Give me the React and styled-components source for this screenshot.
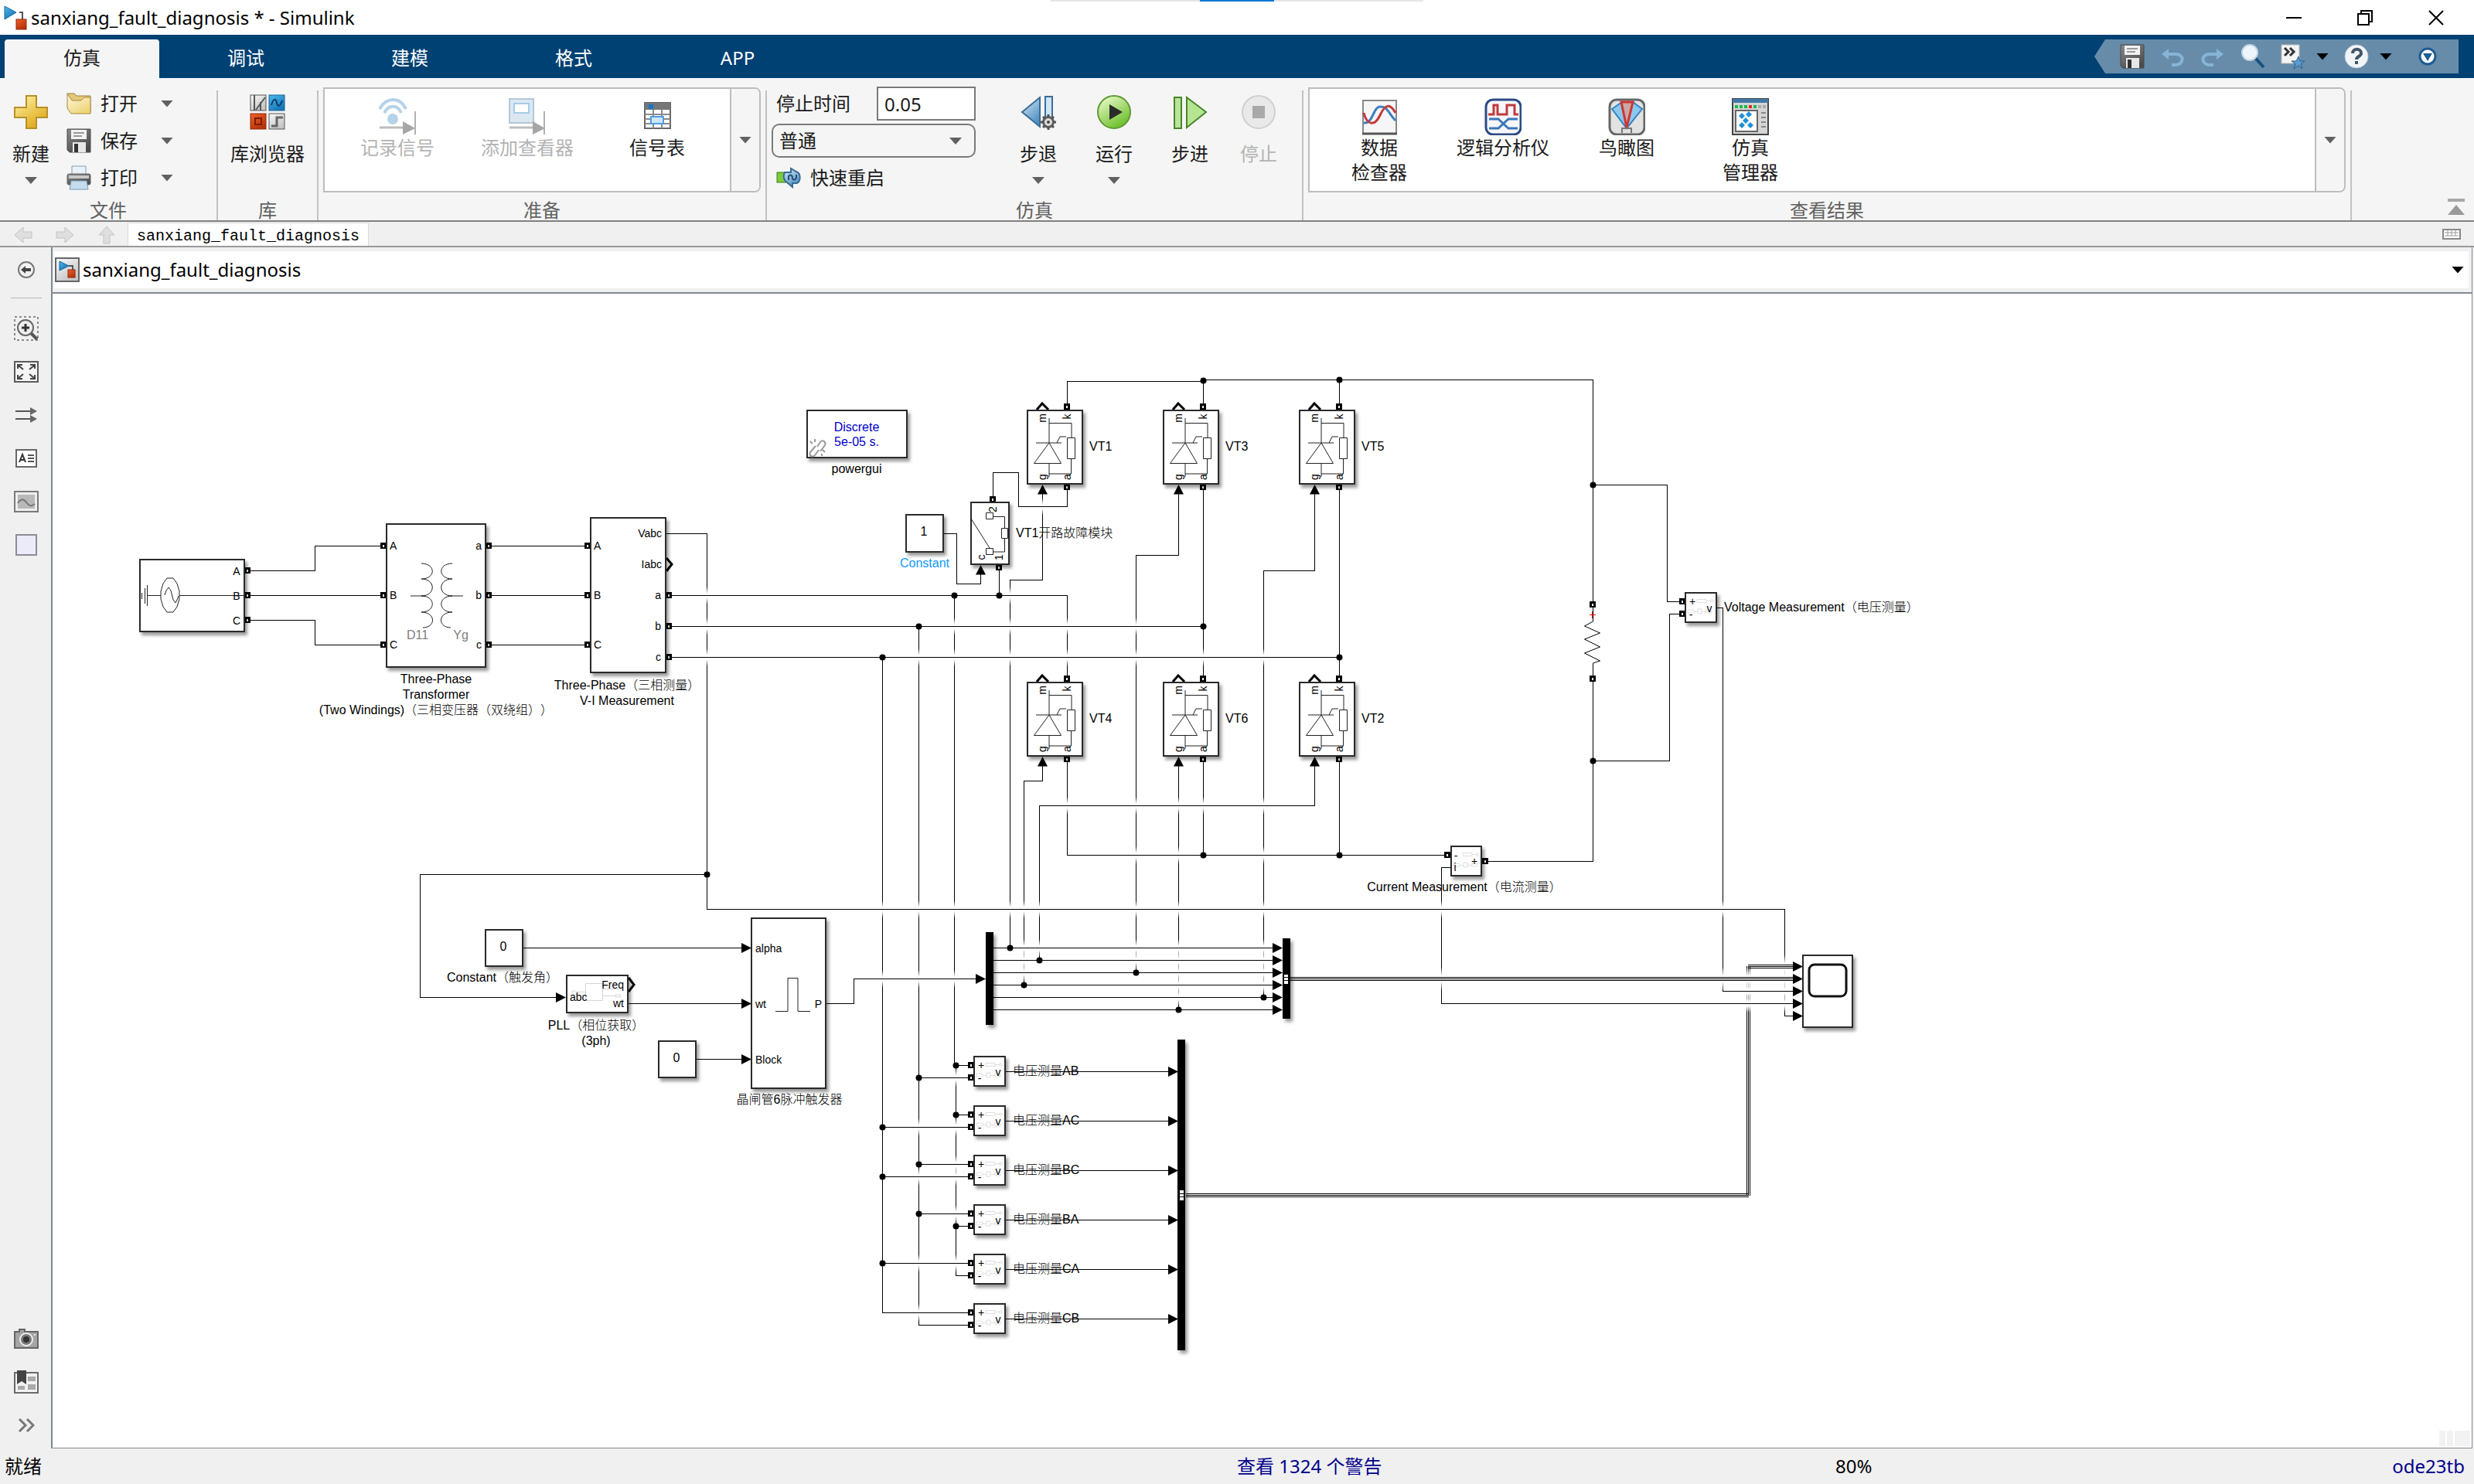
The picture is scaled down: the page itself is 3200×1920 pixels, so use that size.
import React from "react";
import styled, { createGlobalStyle, css } from "styled-components";

const GlobalStyle = createGlobalStyle`
  * { box-sizing: border-box; }
  body { margin: 0; background: #f0f0f0; }
  button, input, select { font: inherit; color: inherit; }
  button { background: none; border: 0; padding: 0; }
`;

const uiFont = `"Noto Sans", "Noto Sans CJK SC", sans-serif`;
const modelFont = `"Liberation Sans", "Noto Sans CJK SC", sans-serif`;

const Window = styled.div`
  display: flex;
  flex-direction: column;
  min-height: 100vh;
  font-family: ${uiFont};
  font-size: 24px;
  line-height: 32px;
  color: #1a1a1a;
  background: #f0f0f0;
`;

/* ---------- title bar ---------- */
const TitleBar = styled.header`
  position: relative;
  display: flex;
  align-items: center;
  height: 45px;
  padding: 0 3px;
  background: #fff;
  color: #000;
`;
const Title = styled.h1`
  margin: 0 auto 0 5px;
  font-size: 24px;
  font-weight: 400;
  line-height: 32px;
`;
const CaptionButton = styled.button`
  display: flex;
  align-items: center;
  justify-content: center;
  width: 92px;
  height: 43px;
`;
const DragHandle = styled.div`
  position: absolute;
  top: 0;
  left: 50%;
  width: 482px;
  height: 2px;
  transform: translateX(-50%);
  background: linear-gradient(90deg, #e5e5e5 40%, #0078d7 40%, #0078d7 60%, #e5e5e5 60%);
`;

/* ---------- tabs ---------- */
const TabBar = styled.nav`
  display: flex;
  align-items: flex-end;
  gap: 12px;
  height: 56px;
  padding: 0 20px 0 6px;
  background: #004173;
`;
const Tab = styled.button`
  width: 200px;
  height: 50px;
  padding-bottom: 3px;
  border-radius: 4px 4px 0 0;
  color: ${(p) => (p.$active ? "#1a1a1a" : "#fff")};
  background: ${(p) => (p.$active ? "#f5f5f5" : "transparent")};
`;
const QuickBar = styled.div`
  display: flex;
  align-items: center;
  gap: 20px;
  width: 471px;
  height: 44px;
  margin: 0 0 6px auto;
  padding: 0 28px 0 33px;
  background: #668caa;
  clip-path: polygon(14px 0, 100% 0, 100% 100%, 14px 100%, 0 50%);
`;
const QuickGroup = styled.div`
  display: flex;
  align-items: center;
  gap: 14px;
`;
const IconButton = styled.button`
  display: flex;
  align-items: center;
  align-self: ${(p) => (p.$middle ? "center" : "auto")};
  justify-content: center;
  min-width: 16px;
  margin-left: ${(p) => (p.$end ? "auto" : "0")};
`;

/* ---------- tool strip ---------- */
const Strip = styled.div`
  display: flex;
  height: 186px;
  padding-top: 9px;
  border-bottom: 2px solid #808080;
  background: #f5f5f5;
`;
const Section = styled.section`
  display: flex;
  flex-direction: column;
  width: ${(p) => (p.$width ? `${p.$width}px` : "auto")};
  flex: ${(p) => (p.$width ? "none" : "1")};
  padding: 0 6px;
`;
const SectionBody = styled.div`
  display: flex;
  height: 144px;
`;
const SectionTitle = styled.h2`
  margin: 5px 0 0;
  font-size: 24px;
  font-weight: 400;
  line-height: 26px;
  text-align: center;
  color: #616161;
`;
const Divider = styled.div`
  width: 2px;
  margin-top: 7px;
  background: #c2c2c2;
`;
const Column = styled.div`
  display: flex;
  flex-direction: column;
  width: ${(p) => p.$width}px;
`;
const FileColumn = styled(Column)`
  padding-left: 6px;
`;
const RunColumn = styled(Column)`
  margin-right: 32px;
`;
const Row = styled.div`
  display: flex;
  align-items: center;
  height: 48px;
  padding-left: ${(p) => (p.$inset ? 6 : 0)}px;
`;
const RowButton = styled.button`
  display: flex;
  align-items: center;
  gap: 12px;
`;
const BigButton = styled.button`
  display: flex;
  flex-direction: column;
  align-items: center;
  width: ${(p) => p.$width}px;
  padding-top: 12px;
  white-space: nowrap;
  color: ${(p) => (p.disabled ? "#b3b3b3" : "#1a1a1a")};
`;
const BigLabel = styled.span`
  margin: 15px 0 14px;
  line-height: 32px;
`;
const Arrow = styled.span`
  width: 16px;
  height: 9px;
  background: ${(p) => p.$color || "#616161"};
  clip-path: polygon(0 0, 100% 0, 50% 100%);
`;
const DropButton = styled.button`
  display: flex;
  margin-left: 30px;
`;
const Gallery = styled.div`
  display: flex;
  flex: 1;
  height: 136px;
  margin-top: 3px;
  border: 2px solid #bdbdbd;
  border-radius: 0 8px 8px 0;
  background: #fff;
  overflow: hidden;
`;
const GalleryItems = styled.div`
  display: flex;
  flex: 1;
  padding-left: 10px;
`;
const GalleryItem = styled.button`
  display: flex;
  flex-direction: column;
  align-items: center;
  width: ${(p) => p.$width}px;
  padding-top: 12px;
  line-height: 32px;
  color: ${(p) => (p.disabled ? "#b3b3b3" : "#1a1a1a")};
`;
const GalleryMore = styled.button`
  display: flex;
  align-items: center;
  justify-content: center;
  width: 38px;
  border-left: 2px solid #bdbdbd;
  background: #f5f5f5;
`;
const TimeLabel = styled.label`
  margin-right: auto;
`;
const TimeInput = styled.input`
  width: 128px;
  height: 44px;
  padding: 0 8px;
  border: 2px solid #7a7a7a;
  background: #fff;
`;
const SelectBox = styled.div`
  position: relative;
  width: 264px;
  height: 44px;
`;
const Select = styled.select`
  width: 100%;
  height: 100%;
  padding: 0 8px;
  border: 2px solid #7a7a7a;
  border-radius: 10px;
  background: #f5f5f5;
  appearance: none;
`;
const SelectArrow = styled(Arrow)`
  position: absolute;
  top: 18px;
  right: 18px;
  pointer-events: none;
`;
const Tail = styled.div`
  display: flex;
  align-items: flex-end;
  justify-content: flex-end;
  width: 158px;
  padding: 0 12px 5px 0;
`;

/* ---------- document bar ---------- */
const DocBar = styled.div`
  display: flex;
  align-items: flex-end;
  height: 33px;
  padding: 0 17px 0 3px;
  border-bottom: 2px solid #9a9a9a;
`;
const NavButton = styled.button`
  display: flex;
  align-items: center;
  justify-content: center;
  width: 54px;
  height: 28px;
`;
const DocTab = styled.button`
  height: 30px;
  padding: 4px 11px 0;
  border: 1px solid #dcdcdc;
  border-bottom: 0;
  background: #fff;
  font-family: "Liberation Mono", monospace;
  font-size: 20px;
  line-height: 24px;
  color: #000;
`;

/* ---------- body ---------- */
const Main = styled.main`
  display: flex;
  flex: 1;
  padding-right: 2px;
`;
const Rail = styled.aside`
  display: flex;
  flex-direction: column;
  width: 66px;
  padding: 1px 0 2px 1px;
`;
const RailButton = styled.button`
  display: flex;
  align-items: center;
  justify-content: center;
  height: 56px;
  margin-top: ${(p) => (p.$push ? "auto" : "0")};
`;
const RailRule = styled.hr`
  width: 40px;
  height: 1px;
  margin: 8px 0 11px 13px;
  border: 0;
  background: #b4b4b4;
`;
const Editor = styled.div`
  display: flex;
  flex: 1;
  flex-direction: column;
  border: solid #828790;
  border-width: 0 1px 1px 2px;
`;
const PathBar = styled.div`
  padding: 5px 4px 5px 2px;
  border-bottom: 2px solid #828790;
  background: #f0f0f0;
`;
const PathField = styled.div`
  display: flex;
  align-items: center;
  gap: 4px;
  height: 48px;
  padding: 0 6px 0 1px;
  background: #fff;
  color: #000;
`;
const PathName = styled.span`
  margin-right: auto;
`;
const Sheet = styled.div`
  position: relative;
  flex: 1;
  min-height: 1400px;
  background: #fff;
  overflow: hidden;
  font-family: ${modelFont};
  font-weight: 300;
  text-spacing-trim: space-all;
  color: #000;
`;
const Wires = styled.svg`
  position: absolute;
  inset: 0;
  width: 100%;
  height: 100%;
`;
const Grip = styled.div`
  position: absolute;
  right: 2px;
  bottom: 2px;
  display: grid;
  grid-template-columns: 8px 8px 20px;
  gap: 2px;
  height: 20px;
`;
const GripCell = styled.span`
  background: #f2f2f2;
`;
const Status = styled.footer`
  display: grid;
  grid-template-columns: 50% 24% 1fr auto;
  align-items: center;
  height: 46px;
  color: #000;
`;
const StatusText = styled.span`
  padding: 0 12px 0 6px;
`;
const StatusLink = styled.a`
  color: #00008b;
  text-decoration: none;
`;

/* ---------- model blocks ---------- */
/* Model space begins at (68, 380) in the upper left corner of the sheet. */
const OX = 68;
const OY = 380;
const place = css`
  position: absolute;
  left: ${(p) => p.$x - OX}px;
  top: ${(p) => p.$y - OY}px;
`;
const Block = styled.div`
  ${place}
  width: ${(p) => p.$w}px;
  height: ${(p) => p.$h}px;
  border: 2px solid #2a2a2a;
  background: #fff;
  box-shadow: 3px 4px 4px rgba(0, 0, 0, 0.4);
`;
const Bar = styled.div`
  ${place}
  width: 10px;
  height: ${(p) => p.$h}px;
  background: #000;
  box-shadow: 3px 4px 4px rgba(0, 0, 0, 0.4);
`;
const shift = { center: "-50%", left: "0", right: "-100%" };
const Label = styled.span`
  ${place}
  transform: translate(${(p) => shift[p.$align || "center"]}, -50%);
  font-size: ${(p) => p.$size || 16}px;
  line-height: ${(p) => p.$line || 20}px;
  text-align: center;
  white-space: pre;
  color: ${(p) => p.$color || "#000"};
`;
const Glyph = styled.svg`
  position: absolute;
  left: -2px;
  top: -2px;
  overflow: visible;
  fill: none;
  stroke: #222;
`;

const poly = (...n) => {
  const pts = [];
  for (let i = 0; i < n.length; i += 2) pts.push([n[i], n[i + 1]]);
  return pts;
};
const METER_Y = [1366, 1430, 1494, 1558, 1622, 1686];
const METER_NAMES = ["AB", "AC", "BC", "BA", "CA", "CB"];

const wires = [
  poly(324, 738, 407, 738, 407, 706, 492, 706),
  poly(324, 770, 492, 770),
  poly(324, 802, 407, 802, 407, 834, 492, 834),
  ...[706, 770, 834].map((y) => poly(636, y, 756, y)),
  poly(861, 690, 914, 690, 914, 1176, 2308, 1176, 2308, 1314, 2320, 1314),
  poly(914, 1131, 543, 1131, 543, 1290, 720, 1290),
  poly(868, 770, 1380, 770, 1380, 874),
  poly(868, 810, 1556, 810),
  poly(868, 850, 1732, 850),
  poly(1220, 690, 1237, 690, 1237, 755, 1268, 755, 1268, 742),
  poly(1284, 642, 1284, 611, 1317, 611, 1317, 655, 1380, 655, 1380, 634),
  poly(1292, 738, 1292, 770),
  poly(1380, 522, 1380, 493, 1556, 493),
  poly(1556, 522, 1556, 491, 2060, 491, 2060, 778),
  poly(1732, 522, 1732, 491),
  poly(1556, 634, 1556, 874),
  poly(1732, 634, 1732, 874),
  poly(1348, 638, 1348, 750, 1306, 750, 1306, 1226),
  poly(1524, 638, 1524, 718, 1469, 718, 1469, 1258),
  poly(1700, 638, 1700, 738, 1634, 738, 1634, 1290),
  poly(1348, 990, 1348, 1010, 1324, 1010, 1324, 1274),
  poly(1524, 990, 1524, 1306),
  poly(1700, 990, 1700, 1042, 1344, 1042, 1344, 1242),
  poly(1380, 986, 1380, 1106, 1868, 1106),
  poly(1556, 986, 1556, 1106),
  poly(1732, 986, 1732, 1106),
  poly(1924, 1114, 2060, 1114, 2060, 882),
  poly(2060, 627, 2156, 627, 2156, 778, 2172, 778),
  poly(2060, 984, 2159, 984, 2159, 794, 2172, 794),
  poly(2221, 786, 2228, 786, 2228, 1282, 2320, 1282),
  poly(1876, 1122, 1864, 1122, 1864, 1298, 2320, 1298),
  poly(677, 1226, 960, 1226),
  poly(812, 1298, 960, 1298),
  poly(900, 1370, 960, 1370),
  poly(1068, 1298, 1104, 1298, 1104, 1266, 1264, 1266),
  ...[1226, 1242, 1258, 1274, 1290, 1306].map((y) => poly(1285, y, 1648, y)),
  ...METER_Y.map((y) => poly(1300, y + 20, 1512, y + 20)),
  poly(1234, 770, 1234, 1378, 1252, 1378),
  poly(1236, 1378, 1236, 1650, 1252, 1650),
  poly(1188, 810, 1188, 1714, 1252, 1714),
  poly(1141, 850, 1141, 1698, 1252, 1698),
  poly(1188, 1394, 1252, 1394),
  poly(1236, 1442, 1252, 1442),
  poly(1141, 1458, 1252, 1458),
  poly(1188, 1506, 1252, 1506),
  poly(1141, 1522, 1252, 1522),
  poly(1188, 1570, 1252, 1570),
  poly(1236, 1586, 1252, 1586),
  poly(1141, 1634, 1252, 1634),
];
const buses = [
  poly(1669, 1266, 2322, 1266),
  poly(1534, 1546, 2261, 1546, 2261, 1250, 2322, 1250),
];
const dots = poly(
  914, 1131, 1234, 770, 1292, 770, 1188, 810, 1556, 810, 1141, 850, 1732, 850,
  1556, 492, 1732, 491, 2060, 627, 2060, 984, 1556, 1106, 1732, 1106,
  1306, 1226, 1344, 1242, 1469, 1258, 1324, 1274, 1634, 1290, 1524, 1306,
  1236, 1378, 1188, 1394, 1236, 1442, 1141, 1458, 1188, 1506, 1141, 1522,
  1188, 1570, 1236, 1586, 1141, 1634
);
const arrowsRight = [
  [732, 1290], [972, 1226], [972, 1298], [972, 1370], [1275, 1266],
  ...[1226, 1242, 1258, 1274, 1290, 1306].map((y) => [1659, y]),
  ...[1250, 1266, 1282, 1298, 1314].map((y) => [2332, y]),
  ...METER_Y.map((y) => [1524, y + 20]),
];
const arrowsUp = [
  [1268, 731],
  ...[1348, 1524, 1700].flatMap((x) => [[x, 627], [x, 979]]),
];
const ports = [
  [320, 738], [320, 770], [320, 802],
  ...[706, 770, 834].flatMap((y) => [[496, y], [632, y], [760, y]]),
  [865, 770], [865, 810], [865, 850],
  [1284, 646], [1292, 734],
  ...[1380, 1556, 1732].flatMap((x) => [[x, 526], [x, 630], [x, 878], [x, 982]]),
  [2060, 782], [2060, 878],
  [2176, 778], [2176, 794], [1872, 1106], [1921, 1114],
  ...METER_Y.flatMap((y) => [[1256, y + 12], [1256, y + 28]]),
];

const segments = (lines, bus) => {
  const out = { v: [], h: [] };
  lines.forEach((pts) => {
    for (let i = 1; i < pts.length; i++) {
      const [a, b] = pts[i - 1];
      const [c, d] = pts[i];
      if (a === c) out.v.push({ x: a, y1: Math.min(b, d), y2: Math.max(b, d), bus });
      else out.h.push({ y: b, x1: Math.min(a, c), x2: Math.max(a, c), bus });
    }
  });
  return out;
};
const thin = segments(wires, false);
const wide = segments(buses, true);
const vertical = [...thin.v, ...wide.v];
const horizontal = [...thin.h, ...wide.h];
const hops = vertical.flatMap((v) =>
  horizontal
    .filter(
      (h) =>
        v.x > h.x1 + 3 && v.x < h.x2 - 3 && h.y > v.y1 + 3 && h.y < v.y2 - 3 &&
        !dots.some(([x, y]) => Math.abs(x - v.x) < 3 && Math.abs(y - h.y) < 3)
    )
    .map((h) => ({ x: v.x, y: h.y, w: v.bus ? 8 : 3, r: h.bus ? 15 : 11 }))
);

function Line({ v, h }) {
  const offsets = (v || h).bus ? [-2, 0, 2] : [0];
  return offsets.map((o) =>
    v ? (
      <rect key={o} x={v.x + o} y={v.y1} width="1" height={v.y2 - v.y1 + 1} />
    ) : (
      <rect key={o} x={h.x1} y={h.y + o} width={h.x2 - h.x1 + 1} height="1" />
    )
  );
}

function WireLayer() {
  return (
    <Wires aria-hidden="true">
      <defs>
        <linearGradient id="hop" x1="0" y1="0" x2="0" y2="1">
          <stop offset="0" stopColor="#fff" stopOpacity="0" />
          <stop offset="0.38" stopColor="#fff" />
          <stop offset="0.62" stopColor="#fff" />
          <stop offset="1" stopColor="#fff" stopOpacity="0" />
        </linearGradient>
      </defs>
      <g transform={`translate(${-OX} ${-OY})`}>
        {vertical.map((v, i) => <Line key={i} v={v} />)}
        {hops.map((p, i) => (
          <rect key={i} x={p.x - (p.w >> 1)} y={p.y - p.r} width={p.w} height={p.r * 2 + 1} fill="url(#hop)" />
        ))}
        {horizontal.map((h, i) => <Line key={i} h={h} />)}
        {dots.map(([x, y], i) => <circle key={i} cx={x + 0.5} cy={y + 0.5} r="4" />)}
        {arrowsRight.map(([x, y], i) => <path key={i} d={`M${x} ${y + 0.5}l-13-6.500v13z`} />)}
        {arrowsUp.map(([x, y], i) => <path key={i} d={`M${x + 0.5} ${y}l-6.500 12.500h13z`} />)}
        {ports.map(([x, y], i) => (
          <g key={i}>
            <rect x={x - 4} y={y - 4} width="8" height="8" />
            <rect x={x - 1} y={y - 1} width="2" height="3" fill="#fff" />
          </g>
        ))}
        <g fill="none" stroke="#000" strokeWidth="3">
          <path d="M862 722l7 8-7 9M813 1265l7 9-7 9" />
          {[1348, 1524, 1700].map((x) => (
            <path key={x} d={`M${x - 7} 530l7-8 8 8M${x - 7} 882l7-8 8 8`} />
          ))}
        </g>
        <path d="M2060.500 786v18l-11 6 20 9-20 8 20 10-20 8 20 10-9 3v18" fill="none" stroke="#000" />
        <path d="M2056 795.500h8M2059.500 791v9" fill="none" stroke="#e00000" />
      </g>
    </Wires>
  );
}

function Thyristor({ x, y, name }) {
  return (
    <>
      <Block $x={x} $y={y} $w={73} $h={97}>
        <Glyph width="73" height="97">
          <path d="M29 11v32M29 17.500h29v19M52.500 36.500h10v27h-10zM57.500 63v20H29M29 69v18M12 43h33M39 43l4-8h8M29 43L9.500 69.500h35z" />
          <g stroke="none" fill="#000" fontSize="14" textAnchor="middle">
            <text transform="translate(25 11) rotate(-90)">m</text>
            <text transform="translate(57 9) rotate(-90)">k</text>
            <text transform="translate(25 87) rotate(-90)">g</text>
            <text transform="translate(57 87) rotate(-90)">a</text>
          </g>
        </Glyph>
      </Block>
      <Label $x={x + 81} $y={y + 48} $align="left">{name}</Label>
    </>
  );
}

const Faint = () => (
  <path stroke="#dedede" d="M16 9.500h12v4H16zM28 11.500h6M34 10h3v3h-3zM4 23h7l2 2-2 2H4zM13 25.500h4M17 22h5v6h-5zM22 25.500h6M28 23h7v4h-7z" />
);

function Meter({ x, y }) {
  return (
    <>
      <Block $x={x} $y={y} $w={42} $h={40}>
        <Glyph width="42" height="40"><Faint /></Glyph>
      </Block>
      <Label $x={x + 10} $y={y + 12} $size={14}>+</Label>
      <Label $x={x + 8} $y={y + 29} $size={14}>-</Label>
      <Label $x={x + 32} $y={y + 21} $size={14}>v</Label>
    </>
  );
}

const PortNames = ({ list }) =>
  list.map(([t, x, y, a]) => (
    <Label key={t + x + y} $x={x} $y={y} $align={a} $size={14}>{t}</Label>
  ));

function Model() {
  return (
    <Sheet>
      <WireLayer />
      <Block $x={180} $y={723} $w={137} $h={95}>
        <Glyph width="137" height="95">
          <path d="M3.500 44v8M7.500 38v20M10.500 34v27M10 47.500h18M52 47.500h84M36 25h8l5 7 3 10v10l-3 10-5 7h-8l-5-7-3-10V42l3-10zM33 47l2-6 3-4 3 4 3 12 3 4 2-4 2-5" />
        </Glyph>
      </Block>
      <PortNames list={[["A", 306, 739], ["B", 306, 771], ["C", 306, 803]]} />

      <Block $x={499} $y={677} $w={130} $h={187}>
        <Glyph width="130" height="187">
          <path d="M46 52c19 0 19 20 0 20c19 0 19 22 0 22c19 0 19 21 0 21c19 0 19 20 2 20M86 52c-19 0-19 20 0 20c-19 0-19 22 0 22c-19 0-19 21 0 21c-19 0-19 20-2 20M32 94h18M84 94h16" />
        </Glyph>
      </Block>
      <PortNames
        list={[
          ["A", 504, 706, "left"], ["B", 504, 770, "left"], ["C", 504, 834, "left"],
          ["a", 623, 706, "right"], ["b", 623, 770, "right"], ["c", 623, 834, "right"],
        ]}
      />
      <Label $x={540} $y={822} $color="#808080">D11</Label>
      <Label $x={596} $y={822} $color="#808080">Yg</Label>
      <Label $x={564} $y={899}>{"Three-Phase\nTransformer\n(Two Windings)（三相变压器（双绕组））"}</Label>

      <Block $x={763} $y={669} $w={99} $h={202} />
      <PortNames
        list={[
          ["A", 768, 706, "left"], ["B", 768, 770, "left"], ["C", 768, 834, "left"],
          ["Vabc", 856, 690, "right"], ["Iabc", 856, 730, "right"],
          ["a", 855, 770, "right"], ["b", 855, 810, "right"], ["c", 855, 850, "right"],
        ]}
      />
      <Label $x={811} $y={897}>{"Three-Phase（三相测量）\nV-I Measurement"}</Label>

      <Block $x={1043} $y={530} $w={131} $h={63}>
        <Glyph width="131" height="63">
          <path stroke="#9a9a9a" strokeWidth="2" d="M14 48l4-6c3-4 8 0 6 4l-6 8M12 47l-7 8c-2 5 3 7 6 4l5-7M5 41l3 3M11 38v4M24 55l-3-3M20 60v-3" />
        </Glyph>
      </Block>
      <Label $x={1108} $y={562} $line={19} $color="#0000cd">{"Discrete\n5e-05 s."}</Label>
      <Label $x={1108} $y={607}>powergui</Label>

      <Block $x={1171} $y={665} $w={50} $h={50} />
      <Label $x={1195} $y={688}>1</Label>
      <Label $x={1196} $y={729} $color="#0d99ff">Constant</Label>

      <Block $x={1255} $y={649} $w={51} $h={82}>
        <Glyph width="51" height="82">
          <path d="M1 22l24 38M20.500 14.500h9v8h-9zM20.500 60.500h9v8h-9zM30 19.500h14.500v15M40.500 34.500h8v13h-8zM44.500 48v17H30" />
          <g stroke="none" fill="#000" fontSize="14" textAnchor="middle">
            <text transform="translate(34 10) rotate(-90)">2</text>
            <text transform="translate(19 72) rotate(-90)">c</text>
            <text transform="translate(42 72) rotate(-90)">1</text>
          </g>
        </Glyph>
      </Block>
      <Label $x={1314} $y={690} $align="left">VT1开路故障模块</Label>

      {[["VT1", 1328, 530], ["VT3", 1504, 530], ["VT5", 1680, 530], ["VT4", 1328, 882], ["VT6", 1504, 882], ["VT2", 1680, 882]].map(
        ([name, x, y]) => <Thyristor key={name} name={name} x={x} y={y} />
      )}

      <Meter x={2179} y={766} />
      <Label $x={2230} $y={786} $align="left">Voltage Measurement（电压测量）</Label>

      <Block $x={1876} $y={1094} $w={41} $h={40}>
        <Glyph width="41" height="40"><Faint /></Glyph>
      </Block>
      <PortNames list={[["-", 1883, 1107], ["i", 1882, 1122], ["+", 1907, 1114]]} />
      <Label $x={1894} $y={1148}>Current Measurement（电流测量）</Label>

      <Block $x={627} $y={1202} $w={50} $h={49} />
      <Label $x={651} $y={1225}>0</Label>
      <Label $x={650} $y={1265}>Constant（触发角）</Label>

      <Block $x={732} $y={1261} $w={81} $h={50}>
        <Glyph width="81" height="50">
          <path stroke="#d4d4d4" d="M8 21h6l2 2-2 3H8zM16 22.500h9M25.500 11.500h22v22h-22zM48 27.500h15M64 26h6l1 3h-7zM48 18.500h20" />
        </Glyph>
      </Block>
      <PortNames list={[["abc", 737, 1290, "left"], ["Freq", 807, 1274, "right"], ["wt", 807, 1298, "right"]]} />
      <Label $x={771} $y={1337}>{"PLL（相位获取）\n(3ph)"}</Label>

      <Block $x={851} $y={1346} $w={50} $h={49} />
      <Label $x={875} $y={1369}>0</Label>

      <Block $x={971} $y={1187} $w={98} $h={222}>
        <Glyph width="98" height="222">
          <path d="M32 121.500h16v-43h13v43h16" />
        </Glyph>
      </Block>
      <PortNames
        list={[["alpha", 977, 1227, "left"], ["wt", 977, 1299, "left"], ["Block", 977, 1371, "left"], ["P", 1063, 1299, "right"]]}
      />
      <Label $x={1021} $y={1423}>晶闸管6脉冲触发器</Label>

      <Bar $x={1275} $y={1206} $h={120} />
      <Bar $x={1659} $y={1214} $h={104} />
      <Bar $x={1523} $y={1345} $h={402} />
      <Wires aria-hidden="true">
        <g transform={`translate(${-OX} ${-OY})`} fill="#fff" stroke="#000">
          <path d="M1660.500 1260.500h6v13h-6zM1660 1264.500h7M1660 1268.500h7M1525.500 1539.500h6v14h-6zM1525 1544.500h7M1525 1548.500h7" />
        </g>
      </Wires>

      {METER_Y.map((y, i) => (
        <React.Fragment key={y}>
          <Meter x={1259} y={y} />
          <Label $x={1310} $y={y + 20} $align="left">{`电压测量${METER_NAMES[i]}`}</Label>
        </React.Fragment>
      ))}

      <Block $x={2331} $y={1235} $w={66} $h={95}>
        <Glyph width="66" height="95">
          <rect x="9" y="13" width="48" height="41" rx="7" strokeWidth="3" stroke="#111" />
        </Glyph>
      </Block>
      <Grip>
        <GripCell />
        <GripCell />
        <GripCell />
      </Grip>
    </Sheet>
  );
}

/* ---------- icons ---------- */
const Svg = ({ w = 32, h = w, box, children }) => (
  <svg width={w} height={h} viewBox={box || `0 0 ${w} ${h}`} fill="none" aria-hidden="true">{children}</svg>
);
const Defs = styled.svg`
  position: absolute;
`;
const Gradients = () => (
  <Defs width="0" height="0" aria-hidden="true">
    <defs>
      {[
        ["gold", "#fff6a8", "#e0a91c"], ["paper", "#fffbe0", "#efd57c"], ["green", "#f4ffd8", "#6fbf2c"], ["blue", "#d7ecfa", "#4f8fc0"],
        ["grey", "#fafafa", "#c4c4c4"], ["dark", "#8c8c8c", "#4c4c4c"], ["red", "#f0602c", "#b83208"], ["sky", "#4fb8ee", "#1676b8"],
      ].map(([id, a, b]) => (
        <linearGradient key={id} id={id} x1="0" y1="0" x2="0.6" y2="1">
          <stop offset="0" stopColor={a} />
          <stop offset="1" stopColor={b} />
        </linearGradient>
      ))}
    </defs>
  </Defs>
);
const AppIcon = () => (
  <Svg w={32}>
    <path d="M22 9h4v10" stroke="#555" strokeWidth="2" />
    <path d="M3 1l15 8L3 18z" fill="url(#sky)" stroke="#17639a" />
    <rect x="18" y="18" width="13" height="13" fill="url(#red)" stroke="#8e2a0a" />
  </Svg>
);
const ModelIcon = () => (
  <Svg w={32}>
    <rect x="1" y="1" width="30" height="30" fill="url(#grey)" stroke="#666" strokeWidth="2" />
    <path d="M18 11h5v6" stroke="#555" strokeWidth="2" />
    <path d="M6 5l12 6-12 6z" fill="url(#sky)" stroke="#17639a" />
    <rect x="17" y="16" width="9" height="10" fill="url(#red)" stroke="#8e2a0a" />
  </Svg>
);
const PlusIcon = () => (
  <Svg w={46}>
    <path d="M17 2h13v15h14v13H30v14H17V30H2V17h15z" fill="url(#gold)" stroke="#b8902a" strokeWidth="2" />
  </Svg>
);
const FolderIcon = () => (
  <Svg w={32}>
    <path d="M1 3h9l3 3h18v21H6z" fill="#e3c77a" stroke="#a3803a" />
    <path d="M1 3l6 9h12l4-4h8v21H6l-5-7z" fill="url(#paper)" stroke="#a8873c" />
  </Svg>
);
const SaveIcon = () => (
  <Svg w={32}>
    <path d="M1 1h30v30H4l-3-3z" fill="url(#dark)" stroke="#484848" />
    <rect x="6" y="2" width="20" height="12" fill="#f2f2f2" />
    <path d="M9 6h14M9 10h11" stroke="#9a9a9a" strokeWidth="2" />
    <rect x="8" y="18" width="17" height="13" fill="#e8e8e8" />
    <rect x="10" y="20" width="5" height="11" fill="#333" />
  </Svg>
);
const PrintIcon = () => (
  <Svg w={32}>
    <path d="M7 1h18v13H7z" fill="#e8f2fa" stroke="#7f9db5" />
    <rect x="1" y="11" width="30" height="14" rx="2" fill="url(#dark)" stroke="#666" />
    <rect x="3" y="13" width="26" height="4" fill="#c9c9c9" />
    <path d="M6 20h20l2 11H4z" fill="#c5dcef" stroke="#7898b0" />
  </Svg>
);
const LibraryIcon = () => (
  <Svg w={46}>
    <rect x="1" y="1" width="20" height="20" fill="url(#grey)" stroke="#555" />
    <path d="M6 1v20M8 20L20 4M14 10v11" stroke="#555" strokeWidth="2" />
    <rect x="25" y="1" width="20" height="20" fill="url(#sky)" stroke="#17639a" />
    <path d="M28 14c3-10 6-8 7-3s4 6 7-3" stroke="#0a3f6b" strokeWidth="2" />
    <rect x="1" y="25" width="20" height="20" fill="url(#red)" stroke="#8e2a0a" />
    <rect x="7" y="31" width="8" height="8" stroke="#7a1f02" strokeWidth="2" />
    <rect x="25" y="25" width="20" height="20" fill="url(#grey)" stroke="#555" />
    <path d="M28 41h7V30h8" stroke="#666" strokeWidth="3" />
  </Svg>
);
const LogSignalIcon = () => (
  <Svg w={48}>
    <path d="M1 14c9-16 26-16 34 0M7 19c6-11 17-11 22 0" stroke="#b5d2e8" strokeWidth="4" />
    <circle cx="18" cy="27" r="7" fill="#b5d2e8" />
    <path d="M1 38h32" stroke="#bdbdbd" strokeWidth="3" />
    <path d="M31 30l16 9-16 8z" fill="#a6a6a6" />
    <path d="M47 17v30" stroke="#b0b0b0" strokeWidth="2" />
  </Svg>
);
const ViewerIcon = () => (
  <Svg w={48}>
    <rect x="1" y="1" width="31" height="31" fill="#dbe8f2" stroke="#b4c8d8" strokeWidth="2" />
    <rect x="7" y="7" width="19" height="12" fill="#fff" stroke="#a8cbe6" strokeWidth="2" />
    <path d="M1 38h32" stroke="#bdbdbd" strokeWidth="3" />
    <path d="M31 30l16 9-16 8z" fill="#a6a6a6" />
    <path d="M46 17v30" stroke="#b0b0b0" strokeWidth="2" />
  </Svg>
);
const TableIcon = () => (
  <Svg w={48}>
    <rect x="8" y="6" width="33" height="33" fill="#fff" stroke="#666" strokeWidth="2" />
    <path d="M8 6h33v9H8z" fill="#777" />
    <rect x="13" y="8" width="6" height="6" fill="#1577c9" />
    <path d="M8 21h33M8 27h33M8 33h33M19 15v24M30 15v24" stroke="#8a8a8a" strokeWidth="2" />
    <rect x="16" y="24" width="16" height="9" fill="#cfe6fb" stroke="#4b9fe6" strokeWidth="2" />
  </Svg>
);
const RestartIcon = () => (
  <Svg w={32} h={28}>
    <rect x="1" y="7" width="12" height="13" fill="#7ccb3c" stroke="#3f7f1c" />
    <path d="M11 7h8V2l7 4c6 2 6 12 1 15h-6v5l-7-6c-5-3-5-9-3-13z" fill="url(#blue)" stroke="#386a94" strokeWidth="2" />
    <path d="M16 17v-5c2-3 5-1 5 2s3 4 5 0v-4" stroke="#1f4f7a" strokeWidth="2" />
  </Svg>
);
const StepBackIcon = () => (
  <Svg w={46}>
    <path d="M25 4v38L2 23z" fill="url(#blue)" stroke="#3c6c96" strokeWidth="2" />
    <rect x="32" y="3" width="9" height="30" fill="#cfe6f7" stroke="#3c6c96" strokeWidth="2" />
    <circle cx="36" cy="36" r="8" fill="#666" />
    <path d="M36 26v20M26 36h20M29 29l14 14M43 29L29 43" stroke="#555" strokeWidth="3" />
    <circle cx="36" cy="36" r="5" fill="#ddd" />
    <circle cx="36" cy="36" r="2" fill="#444" />
  </Svg>
);
const RunIcon = () => (
  <Svg w={46}>
    <circle cx="23" cy="23" r="21" fill="url(#green)" stroke="#5d9a34" strokeWidth="2" />
    <path d="M17 13l17 10-17 10z" fill="#2b2b2b" />
  </Svg>
);
const StepForwardIcon = () => (
  <Svg w={46}>
    <rect x="3" y="4" width="9" height="40" fill="#b9e59a" stroke="#47862a" strokeWidth="2" />
    <path d="M19 4v39l25-20z" fill="#b6e592" stroke="#47862a" strokeWidth="2" />
  </Svg>
);
const StopIcon = () => (
  <Svg w={46}>
    <circle cx="23" cy="23" r="21" fill="#e9e9e9" stroke="#cfcfcf" strokeWidth="2" />
    <rect x="15" y="15" width="16" height="16" fill="#a9a9a9" />
  </Svg>
);
const InspectorIcon = () => (
  <Svg w={48}>
    <rect x="3" y="3" width="43" height="43" fill="#f6f6f6" stroke="#888" strokeWidth="2" />
    <path d="M2 46h45" stroke="#555" strokeWidth="3" />
    <path d="M4 32c12 2 12-22 22-21 9 0 10 9 19 18" stroke="#3d7fc0" strokeWidth="3" />
    <path d="M4 19c4 16 14 18 21 3s13-15 20-3" stroke="#c4393a" strokeWidth="3" />
  </Svg>
);
const AnalyzerIcon = () => (
  <Svg w={48}>
    <rect x="2" y="2" width="45" height="45" rx="9" fill="#f7f7fb" stroke="#2b4a86" strokeWidth="3" />
    <path d="M5 21h7V9h5v12h12V9h10v12h5" stroke="#c23a3c" strokeWidth="3" />
    <path d="M6 27h12l13 12h12M6 39h12l13-12h12" stroke="#3a76b8" strokeWidth="3" />
  </Svg>
);
const BirdsEyeIcon = () => (
  <Svg w={48}>
    <rect x="2" y="2" width="45" height="45" rx="9" fill="#e2e2e2" stroke="#666" strokeWidth="3" />
    <path d="M5 14l13-9h14l12 9-20 25z" fill="#8cc8ee" stroke="#2f86c4" strokeWidth="2" />
    <path d="M17 5h15l-8 33z" fill="#c9a9a4" stroke="#d03434" strokeWidth="3" />
    <path d="M18 45v-6h12v6" stroke="#777" strokeWidth="2" />
  </Svg>
);
const ManagerIcon = () => (
  <Svg w={48}>
    <rect x="1" y="1" width="46" height="46" fill="#d5d5d5" stroke="#444" strokeWidth="2" />
    <rect x="1" y="1" width="46" height="5" fill="#4478a8" />
    {["#19b84c", "#19b84c", "#19b84c", "#e02a1c", "#19b84c", "#aaa", "#aaa"].map((c, i) => (
      <rect key={i} x={4 + i * 6} y="9" width="4" height="4" fill={c} />
    ))}
    <rect x="5" y="16" width="28" height="27" fill="#fff" stroke="#666" strokeWidth="2" />
    {[[13, 23], [22, 21], [18, 29], [13, 35], [24, 35]].map(([x, y]) => (
      <path key={x + "-" + y} d={`M${x} ${y - 4}l4 4-4 4-4-4z`} fill="#1f8fd8" />
    ))}
    <path d="M38 19h6M38 25h6M38 31h6M38 37h6" stroke="#888" strokeWidth="2" />
  </Svg>
);
const Undo = ({ flip }) => (
  <Svg w={32}>
    <g transform={flip ? "translate(32 0) scale(-1 1)" : undefined}>
      <path d="M11 6l-9 7 9 7z" fill="#86b4d6" />
      <path d="M8 13h12c12 0 11 14 0 14h-5" stroke="#86b4d6" strokeWidth="4" />
    </g>
  </Svg>
);
const SearchIcon = () => (
  <Svg w={32}>
    <path d="M19 18l11 12" stroke="#17527f" strokeWidth="4" />
    <circle cx="12" cy="11" r="10" fill="#eef5fa" stroke="#c5d6e2" strokeWidth="2" />
  </Svg>
);
const FavoriteIcon = () => (
  <Svg w={32}>
    <rect x="1" y="1" width="23" height="24" fill="#f4f4f4" stroke="#bbb" />
    <path d="M5 5l5 5-5 5M12 5l5 5-5 5" stroke="#333" strokeWidth="3" />
    <path d="M23 16l2 6h6l-5 4 2 6-5-4-6 4 2-6-5-4h6z" fill="#5b9bd0" stroke="#2d5f8c" />
  </Svg>
);
const HelpIcon = () => (
  <Svg w={32}>
    <circle cx="16" cy="16" r="15" fill="#f2f5f8" stroke="#b9c8d4" />
    <path d="M11 12c0-7 11-7 11 0 0 4-6 4-6 8" stroke="#445566" strokeWidth="4" />
    <rect x="14" y="22" width="4" height="4" fill="#445566" />
  </Svg>
);
const CircleDownIcon = () => (
  <Svg w={24}>
    <circle cx="12" cy="12" r="10" fill="#fff" stroke="#1d5c92" strokeWidth="3" />
    <path d="M6 8h12l-6 10z" fill="#1d5c92" />
  </Svg>
);
const NavArrow = ({ turn }) => (
  <Svg w={24}>
    <path transform={`rotate(${turn} 12 12)`} d="M1 12L12 2v6h11v8H12v6z" fill="#dedede" stroke="#c4c4c4" />
  </Svg>
);
const CollapseIcon = () => (
  <Svg w={22} h={24}>
    <rect x="0" y="1" width="22" height="4" fill="#a8a8a8" />
    <path d="M11 9l11 13H0z" fill="#9a9a9a" />
  </Svg>
);
const KeyboardIcon = () => (
  <Svg w={24} h={14}>
    <rect x="1" y="1" width="22" height="12" fill="#fff" stroke="#888" strokeWidth="2" />
    <path d="M3 5h18M3 9h18M7 1v8M12 1v8M17 1v8" stroke="#999" />
  </Svg>
);
const HideIcon = () => (
  <Svg w={24}>
    <circle cx="12" cy="12" r="10" fill="#f2f2f2" stroke="#777" strokeWidth="2" />
    <path d="M5 12l6-5v3h7v4h-7v3z" fill="#444" />
  </Svg>
);
const ZoomIcon = () => (
  <Svg w={32}>
    <rect x="1" y="1" width="30" height="30" stroke="#8a8a8a" strokeWidth="2" strokeDasharray="3 3" />
    <path d="M21 21l9 9" stroke="#555" strokeWidth="4" />
    <circle cx="15" cy="15" r="10" fill="#eee" stroke="#666" strokeWidth="2" />
    <path d="M10 15h10M15 10v10" stroke="#333" strokeWidth="3" />
  </Svg>
);
const FitIcon = () => (
  <Svg w={32} h={28}>
    <rect x="1" y="1" width="30" height="26" fill="#f5f5f5" stroke="#5a5a5a" strokeWidth="2" />
    <path d="M5 10V5h6M21 5h6v5M27 18v5h-6M11 23H5v-5M6 6l6 5M26 6l-6 5M26 22l-6-5M6 22l6-5" stroke="#444" strokeWidth="2" />
  </Svg>
);
const FlowIcon = () => (
  <Svg w={28} h={22}>
    <path d="M0 6h22M0 16h22" stroke="#555" strokeWidth="2" />
    <path d="M19 1l9 5-9 5zM19 11l9 5-9 5z" fill="#666" />
  </Svg>
);
const TextIcon = () => (
  <Svg w={28} h={24}>
    <rect x="1" y="1" width="26" height="22" fill="#fff" stroke="#666" strokeWidth="2" />
    <path d="M5 17l4-10 4 10M6 14h6" stroke="#333" strokeWidth="2" />
    <path d="M16 8h8M16 12h8M16 16h8" stroke="#555" strokeWidth="2" />
  </Svg>
);
const PictureIcon = () => (
  <Svg w={32} h={28}>
    <rect x="1" y="1" width="30" height="26" fill="#eee" stroke="#7a7a7a" strokeWidth="2" />
    <rect x="5" y="5" width="22" height="18" fill="#b9b9b9" />
    <path d="M5 16c5-8 9-4 12 0s6 4 10 1" stroke="#777" strokeWidth="2" />
  </Svg>
);
const AreaIcon = () => (
  <Svg w={28}>
    <rect x="1" y="1" width="26" height="26" fill="#ebebfa" stroke="#8d8d95" strokeWidth="2" />
  </Svg>
);
const CameraIcon = () => (
  <Svg w={32} h={26}>
    <path d="M1 4h6V1h7v3h17v21H1z" fill="#a5a5a5" stroke="#666" strokeWidth="2" />
    <circle cx="16" cy="14" r="8" fill="#777" stroke="#eee" strokeWidth="2" />
    <circle cx="16" cy="14" r="4" fill="#333" />
    <circle cx="27" cy="8" r="1" fill="#fff" />
  </Svg>
);
const BookIcon = () => (
  <Svg w={32}>
    <rect x="1" y="4" width="30" height="26" fill="#f2f2f2" stroke="#6a6a6a" strokeWidth="2" />
    <path d="M4 1h12v18l-6-4-6 4z" fill="#444" />
    <path d="M18 9h10v6H18zM18 19h10v7H18zM5 21h9v5H5z" fill="#aaa" />
  </Svg>
);
const MoreIcon = () => (
  <Svg w={22} h={20}>
    <path d="M2 2l8 8-8 8M12 2l8 8-8 8" stroke="#777" strokeWidth="3" />
  </Svg>
);

const fileRows = [["打开", FolderIcon], ["保存", SaveIcon], ["打印", PrintIcon]];
const prepItems = [["记录信号", LogSignalIcon, true], ["添加查看器", ViewerIcon, true], ["信号表", TableIcon, false]];
const resultItems = [[["数据", "检查器"], InspectorIcon], [["逻辑分析仪"], AnalyzerIcon], [["鸟瞰图"], BirdsEyeIcon], [["仿真", "管理器"], ManagerIcon]];
const railItems = [["放大", ZoomIcon], ["适应视图", FitIcon], ["采样时间", FlowIcon], ["注释", TextIcon], ["图像", PictureIcon], ["区域", AreaIcon]];

export default function App() {
  return (
    <Window>
      <GlobalStyle />
      <Gradients />
      <TitleBar>
        <DragHandle />
        <AppIcon />
        <Title>sanxiang_fault_diagnosis * - Simulink</Title>
        <CaptionButton aria-label="最小化">
          <Svg w={20}><path d="M0 10h20" stroke="#000" strokeWidth="2" /></Svg>
        </CaptionButton>
        <CaptionButton aria-label="还原">
          <Svg w={20}><path d="M1 5h14v14H1zM5 5V1h14v14h-4" stroke="#000" strokeWidth="2" /></Svg>
        </CaptionButton>
        <CaptionButton aria-label="关闭">
          <Svg w={20}><path d="M1 1l18 18M19 1L1 19" stroke="#000" strokeWidth="2" /></Svg>
        </CaptionButton>
      </TitleBar>

      <TabBar>
        <Tab $active>仿真</Tab>
        <Tab>调试</Tab>
        <Tab>建模</Tab>
        <Tab>格式</Tab>
        <Tab>APP</Tab>
        <QuickBar>
          <IconButton aria-label="保存"><SaveIcon /></IconButton>
          <IconButton aria-label="撤销"><Undo /></IconButton>
          <IconButton aria-label="重做"><Undo flip /></IconButton>
          <IconButton aria-label="搜索"><SearchIcon /></IconButton>
          <QuickGroup>
            <IconButton aria-label="收藏"><FavoriteIcon /></IconButton>
            <IconButton aria-label="收藏菜单"><Arrow $color="#000" /></IconButton>
          </QuickGroup>
          <QuickGroup>
            <IconButton aria-label="帮助"><HelpIcon /></IconButton>
            <IconButton aria-label="帮助菜单"><Arrow $color="#000" /></IconButton>
          </QuickGroup>
          <IconButton $end aria-label="更多"><CircleDownIcon /></IconButton>
        </QuickBar>
      </TabBar>

      <Strip>
        <Section $width={280}>
          <SectionBody>
            <BigButton $width={68}>
              <PlusIcon />
              <BigLabel>新建</BigLabel>
              <Arrow />
            </BigButton>
            <FileColumn $width={190}>
              {fileRows.map(([name, Icon]) => (
                <Row key={name} $inset>
                  <RowButton><Icon />{name}</RowButton>
                  <DropButton aria-label={`${name}菜单`}><Arrow /></DropButton>
                </Row>
              ))}
            </FileColumn>
          </SectionBody>
          <SectionTitle>文件</SectionTitle>
        </Section>
        <Divider />
        <Section $width={128}>
          <SectionBody>
            <BigButton $width={116}>
              <LibraryIcon />
              <BigLabel>库浏览器</BigLabel>
            </BigButton>
          </SectionBody>
          <SectionTitle>库</SectionTitle>
        </Section>
        <Divider />
        <Section $width={578}>
          <SectionBody>
            <Gallery>
              <GalleryItems>
                {prepItems.map(([name, Icon, off]) => (
                  <GalleryItem key={name} $width={168} disabled={off}><Icon />{name}</GalleryItem>
                ))}
              </GalleryItems>
              <GalleryMore aria-label="更多工具"><Arrow /></GalleryMore>
            </Gallery>
          </SectionBody>
          <SectionTitle>准备</SectionTitle>
        </Section>
        <Divider />
        <Section $width={692}>
          <SectionBody>
            <RunColumn $width={264}>
              <Row $inset>
                <TimeLabel htmlFor="stop-time">停止时间</TimeLabel>
                <TimeInput id="stop-time" defaultValue="0.05" />
              </Row>
              <Row>
                <SelectBox>
                  <Select aria-label="仿真模式" defaultValue="普通">
                    <option>普通</option>
                    <option>加速</option>
                  </Select>
                  <SelectArrow />
                </SelectBox>
              </Row>
              <Row $inset>
                <RowButton><RestartIcon />快速重启</RowButton>
              </Row>
            </RunColumn>
            <BigButton $width={98}><StepBackIcon /><BigLabel>步退</BigLabel><Arrow /></BigButton>
            <BigButton $width={98}><RunIcon /><BigLabel>运行</BigLabel><Arrow /></BigButton>
            <BigButton $width={98}><StepForwardIcon /><BigLabel>步进</BigLabel></BigButton>
            <BigButton $width={80} disabled><StopIcon /><BigLabel>停止</BigLabel></BigButton>
          </SectionBody>
          <SectionTitle>仿真</SectionTitle>
        </Section>
        <Divider />
        <Section>
          <SectionBody>
            <Gallery>
              <GalleryItems>
                {resultItems.map(([lines, Icon]) => (
                  <GalleryItem key={lines[0]} $width={160}>
                    <Icon />
                    {lines.map((l) => <span key={l}>{l}</span>)}
                  </GalleryItem>
                ))}
              </GalleryItems>
              <GalleryMore aria-label="更多结果"><Arrow /></GalleryMore>
            </Gallery>
          </SectionBody>
          <SectionTitle>查看结果</SectionTitle>
        </Section>
        <Divider />
        <Tail>
          <IconButton aria-label="收起工具条"><CollapseIcon /></IconButton>
        </Tail>
      </Strip>

      <DocBar>
        <NavButton aria-label="后退"><NavArrow turn={0} /></NavButton>
        <NavButton aria-label="前进"><NavArrow turn={180} /></NavButton>
        <NavButton aria-label="向上"><NavArrow turn={90} /></NavButton>
        <DocTab>sanxiang_fault_diagnosis</DocTab>
        <IconButton $end $middle aria-label="键盘"><KeyboardIcon /></IconButton>
      </DocBar>

      <Main>
        <Rail>
          <RailButton aria-label="隐藏浏览器"><HideIcon /></RailButton>
          <RailRule />
          {railItems.map(([name, Icon]) => (
            <RailButton key={name} aria-label={name}><Icon /></RailButton>
          ))}
          <RailButton $push aria-label="截图"><CameraIcon /></RailButton>
          <RailButton aria-label="模型浏览器"><BookIcon /></RailButton>
          <RailButton aria-label="展开"><MoreIcon /></RailButton>
        </Rail>
        <Editor>
          <PathBar>
            <PathField>
              <ModelIcon />
              <PathName>sanxiang_fault_diagnosis</PathName>
              <IconButton aria-label="路径菜单"><Arrow $color="#000" /></IconButton>
            </PathField>
          </PathBar>
          <Model />
        </Editor>
      </Main>

      <Status>
        <StatusText>就绪</StatusText>
        <StatusLink href="#warnings">查看 1324 个警告</StatusLink>
        <StatusText>80%</StatusText>
        <StatusText><StatusLink href="#solver">ode23tb</StatusLink></StatusText>
      </Status>
    </Window>
  );
}
